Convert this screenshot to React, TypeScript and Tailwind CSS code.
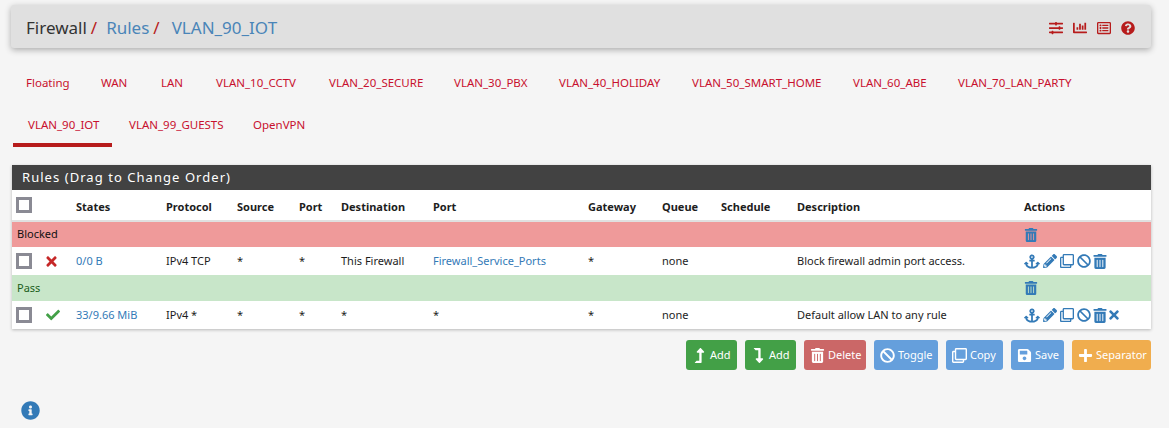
import {
  FaAnchor,
  FaBan,
  FaCheck,
  FaChartBar,
  FaInfoCircle,
  FaLevelDownAlt,
  FaLevelUpAlt,
  FaPencilAlt,
  FaPlus,
  FaQuestionCircle,
  FaRegClone,
  FaRegListAlt,
  FaSave,
  FaSlidersH,
  FaTimes,
  FaTrashAlt,
} from 'react-icons/fa';

const tabsTop = [
  { label: 'Floating', width: 'w-[75px]' },
  { label: 'WAN', width: 'w-[60px]' },
  { label: 'LAN', width: 'w-[55px]' },
  { label: 'VLAN_10_CCTV', width: 'w-[113px]' },
  { label: 'VLAN_20_SECURE', width: 'w-[125px]' },
  { label: 'VLAN_30_PBX', width: 'w-[105px]' },
  { label: 'VLAN_40_HOLIDAY', width: 'w-[133px]' },
  { label: 'VLAN_50_SMART_HOME', width: 'w-[161px]' },
  { label: 'VLAN_60_ABE', width: 'w-[105px]' },
  { label: 'VLAN_70_LAN_PARTY', width: 'w-[145px]' },
];
const tabsBottom = [
  { label: 'VLAN_90_IOT', width: 'w-[99px]' },
  { label: 'VLAN_99_GUESTS', width: 'w-[124px]' },
  { label: 'OpenVPN', width: 'w-[80px]' },
];

const headers = ['States', 'Protocol', 'Source', 'Port', 'Destination', 'Port', 'Gateway', 'Queue', 'Schedule', 'Description', 'Actions'];

const Checkbox = () => <span className="block w-4 h-4 border-[3px] border-[#8a8a94] bg-white" />;

const Actions = ({ extra }: { extra?: boolean }) => (
  <div className="flex items-center text-[#337ab7] text-[15px]">
    <FaAnchor className="w-[16px] h-[15px]" />
    <FaPencilAlt className="ml-[3px] w-[14px] h-[14px]" />
    <FaRegClone className="ml-[3px] w-[14px] h-[14px]" />
    <FaBan className="ml-[3px] w-[14px] h-[14px]" />
    <FaTrashAlt className="ml-[2px] w-[14px] h-[15px]" />
    {extra && <FaTimes className="ml-[1px] w-[12px] h-[14px]" />}
  </div>
);

const SeparatorRow = ({ label, className }: { label: string; className: string }) => (
  <tr className={`h-[26px] ${className}`}>
    <td colSpan={12} className="pl-[5px]">{label}</td>
    <td className="pl-[5px]">
      <FaTrashAlt className="text-[#337ab7] text-[14px]" />
    </td>
  </tr>
);

const RuleRow = (props: { status: React.ReactNode; states: string; protocol: string; destination: string; port: string; description: string; extra?: boolean }) => (
  <tr className="h-[28px] bg-white">
    <td className="pl-1"><Checkbox /></td>
    <td className="pl-[5px]">{props.status}</td>
    <td className="pl-[5px] text-[#337ab7]">{props.states}</td>
    <td className="pl-[5px]">{props.protocol}</td>
    <td className="pl-[5px]">*</td>
    <td className="pl-[5px]">*</td>
    <td className="pl-[5px]">{props.destination}</td>
    <td className={`pl-[5px] ${props.port === '*' ? '' : 'text-[#337ab7]'}`}>{props.port}</td>
    <td className="pl-[5px]">*</td>
    <td className="pl-[5px]">none</td>
    <td></td>
    <td className="pl-[5px]">{props.description}</td>
    <td className="pl-[5px]"><Actions extra={props.extra} /></td>
  </tr>
);

const Button = ({ icon, label, className }: { icon: React.ReactNode; label: string; className: string }) => (
  <button className={`flex items-center gap-[2px] h-[30px] pl-[4px] rounded-[3px] text-white text-[11px] ${className}`}>
    <span className="w-[18px] flex justify-center text-[15px]">{icon}</span>
    {label}
  </button>
);

export default function App() {
  return (
    <div className="min-h-[428px] bg-[#f5f5f5] text-[#1d1d1d] text-[11px] font-['Noto_Sans','Open_Sans',sans-serif] overflow-hidden">
      <div className="pt-[5px] px-[11px] pr-[18px]">
        <div className="h-[43px] flex items-center justify-between pt-[2px] pl-[15px] pr-[16px] bg-[#e0e0e0] rounded-[3px] shadow-[0_2px_6px_rgba(0,0,0,0.3)]">
          <div className="flex items-center text-[17px] text-[#333]">
            <span>Firewall</span>
            <span className="text-[#b71c1c] ml-[4px] mr-[9px]">/</span>
            <span className="text-[#4a85b8]">Rules</span>
            <span className="text-[#b71c1c] ml-[4px] mr-[12px]">/</span>
            <span className="text-[#4a85b8]">VLAN_90_IOT</span>
          </div>
          <div className="flex items-center gap-[10px] text-[#b71c1c] text-[14px]">
            <FaSlidersH />
            <FaChartBar />
            <FaRegListAlt />
            <FaQuestionCircle />
          </div>
        </div>
      </div>

      <nav className="text-[11.5px] text-[#c8102e]">
        <div className="flex pl-[26px] h-[41px] mt-[14px] items-center">
          {tabsTop.map((tab) => (
            <a key={tab.label} className={`shrink-0 ${tab.width}`}>{tab.label}</a>
          ))}
        </div>
        <div className="flex pl-[13px] h-[43px] mt-[1px]">
          {tabsBottom.map((tab, i) => (
            <a key={tab.label} className={`pl-[15px] pt-[2px] flex items-center ${tab.width} ${i === 0 ? 'border-b-4 border-[#b71c1c] mr-[2px]' : 'pb-[4px]'}`}>{tab.label}</a>
          ))}
        </div>
      </nav>

      <div className="ml-[12px] mr-[18px] mt-[18px] shadow-[0_1px_3px_rgba(0,0,0,0.25)]">
        <div className="h-[25px] flex items-center pl-[10px] pt-px bg-[#424242] text-white text-[13px] tracking-[1.05px]">
          Rules (Drag to Change Order)
        </div>
        <table className="w-full table-fixed border-collapse">
          <colgroup>
            <col className="w-[29px]" />
            <col className="w-[30px]" />
            <col className="w-[90px]" />
            <col className="w-[71px]" />
            <col className="w-[62px]" />
            <col className="w-[42px]" />
            <col className="w-[92px]" />
            <col className="w-[155px]" />
            <col className="w-[74px]" />
            <col className="w-[59px]" />
            <col className="w-[76px]" />
            <col className="w-[227px]" />
            <col />
          </colgroup>
          <thead>
            <tr className="h-[31px] bg-white border-b-2 border-[#e0e0e0]">
              <th className="pl-1 text-left"><Checkbox /></th>
              <th></th>
              {headers.map((h, i) => (
                <th key={i} className="pl-[5px] pt-[4px] text-left font-bold">{h}</th>
              ))}
            </tr>
          </thead>
          <tbody>
            <SeparatorRow label="Blocked" className="bg-[#ef9a9a] text-[#111]" />
            <RuleRow
              status={<FaTimes className="-ml-[2px] text-[#c62828] text-[15px]" />}
              states="0/0 B"
              protocol="IPv4 TCP"
              destination="This Firewall"
              port="Firewall_Service_Ports"
              description="Block firewall admin port access."
            />
            <SeparatorRow label="Pass" className="bg-[#c8e6c9] text-[#1b5e20]" />
            <RuleRow
              status={<FaCheck className="text-[#43a047] text-[14px]" />}
              states="33/9.66 MiB"
              protocol="IPv4 *"
              destination="*"
              port="*"
              description="Default allow LAN to any rule"
              extra
            />
          </tbody>
        </table>
      </div>

      <div className="flex justify-end gap-2 mr-[18px] mt-[11px]">
        <Button icon={<FaLevelUpAlt />} label="Add" className="w-[51px] bg-[#43a047]" />
        <Button icon={<FaLevelDownAlt />} label="Add" className="w-[51px] bg-[#43a047]" />
        <Button icon={<FaTrashAlt />} label="Delete" className="w-[62px] bg-[#cb6767]" />
        <Button icon={<FaBan />} label="Toggle" className="w-[64px] bg-[#659fdc]" />
        <Button icon={<FaRegClone />} label="Copy" className="w-[57px] bg-[#659fdc]" />
        <Button icon={<FaSave />} label="Save" className="w-[53px] bg-[#659fdc]" />
        <Button icon={<FaPlus />} label="Separator" className="w-[79px] bg-[#f0ad4e]" />
      </div>

      <div className="pl-[21px] mt-[31px]">
        <FaInfoCircle className="text-[#337ab7] text-[19px]" />
      </div>
    </div>
  );
}
